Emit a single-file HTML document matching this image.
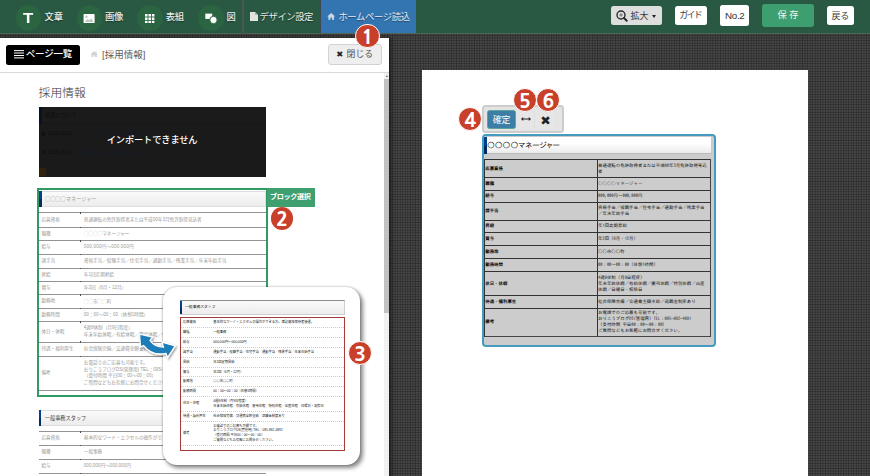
<!DOCTYPE html>
<html lang="ja">
<head>
<meta charset="utf-8">
<title>ホームページ読込</title>
<style>
*{box-sizing:border-box;margin:0;padding:0}
html,body{width:870px;height:476px;overflow:hidden}
body{position:relative;font-family:"Liberation Sans","Noto Sans CJK JP",sans-serif;color:#333;
  background-color:#474747;
  background-image:
    linear-gradient(90deg,rgba(0,0,0,.27) 0,rgba(0,0,0,.27) .86px,transparent .86px),
    linear-gradient(0deg,rgba(0,0,0,.27) 0,rgba(0,0,0,.27) .86px,transparent .86px);
  background-size:2.57px 2.57px;}
.abs{position:absolute}

/* ---------- top toolbar ---------- */
#bar{position:absolute;left:0;top:0;width:870px;height:34px;background:#2a5943;border-bottom:1px solid #4f6459}
.circ{position:absolute;top:5.2px;width:25.8px;height:25.8px;border-radius:50%;background:#2a6441;margin-left:-.4px}
.tlabel{position:absolute;top:10.9px;font-size:9.3px;line-height:12px;font-weight:500;color:#e9eeeb;white-space:nowrap;letter-spacing:-.2px;text-shadow:0 1px 1px rgba(0,0,0,.45)}
.tbtn{position:absolute;background:#fff;border-radius:2.5px;color:#333;font-size:9px;text-align:center;white-space:nowrap}

/* ---------- left panel ---------- */
#panel{position:absolute;left:0;top:37.6px;width:389px;height:440px;background:#fff;box-shadow:2px 0 4px rgba(0,0,0,.55);overflow:hidden}
#phead{position:absolute;left:0;top:0;width:389px;height:35px;border-bottom:1px solid #d9d9d9;background:#fff}
#sb{position:absolute;left:384px;top:35px;width:5px;height:405px;background:#f1f1f1}
#sb i{position:absolute;left:0;top:6.3px;width:5px;height:234px;background:#c1c1c1}

.hbox{position:absolute;height:16px;background:linear-gradient(#fafafa,#ececec);border:1px solid #ddd;border-left:0}
.hbox b{position:absolute;left:0;top:-.5px;width:2.8px;height:16px;background:linear-gradient(#05418a 50%,#042c61 50%)}
.hbox>span{position:absolute;left:6.2px;top:3.4px;font-size:5.2px;line-height:8px;white-space:nowrap;font-weight:400}

.tbl{position:absolute;font-size:4.6px;line-height:6.75px;color:#9a9a9a}
.tbl .r{position:relative;border-top:1px solid #939393;display:flex;align-items:center}
.tbl .r:last-child{border-bottom:1px solid #939393}
.tbl .l{width:42px;padding-left:2.6px;white-space:nowrap;flex:none}
.tbl .v{padding-left:3px;white-space:nowrap}
.tbl .r:before{content:"";position:absolute;left:41.2px;top:-1.2px;width:1.1px;height:1.3px;background:#4a4a4a}
.tbl .c{color:#c8c8c8}
.c{font-family:"Noto Sans CJK JP",sans-serif}
.s{font-weight:700}

/* card */
#card{position:absolute;left:163px;top:287px;width:197.2px;height:178.2px;background:#fff;border-radius:14px;box-shadow:2.5px 3px 4px rgba(0,0,0,.46),0 0 2.5px rgba(0,0,0,.32)}
.ctbl{position:absolute;font-size:3.25px;line-height:4.9px;color:#222}
.ctbl .r{position:relative;border-top:.7px dotted #cdcdcd;display:flex;align-items:center}
.ctbl .l{width:29px;padding-left:2px;white-space:nowrap;flex:none}
.ctbl .v{padding-left:3.3px;white-space:nowrap}

.badge{position:absolute;width:24.2px;height:24.2px;border-radius:50%;background:#c8402a;border:1px solid #fff;color:#fff;font-family:"NanumGothic","Liberation Sans",sans-serif;font-weight:800;font-size:19.2px;line-height:25.6px;text-align:center}

/* ---------- right canvas ---------- */
#page{position:absolute;left:421.8px;top:70.4px;width:386px;height:410px;background:#fff}
#pop{position:absolute;left:482.1px;top:104.9px;width:81.5px;height:28px;background:#e4e4e4;border:2px solid #cdcdcd;border-radius:3.5px}
#blk{position:absolute;left:482px;top:134.3px;width:233.6px;height:212.4px;background:#cccccc;border:2px solid #459cc1;border-radius:4px;overflow:hidden}
.rtbl{position:absolute;left:0;top:23.15px;width:226.6px;font-family:"IPAGothic","Noto Sans CJK JP",monospace;font-size:4.45px;line-height:5.9px;color:#111;border-left:1px solid #333;border-right:1px solid #444}
.rtbl .r{position:relative;border-top:1.1px solid #333;display:flex;align-items:center}
.rtbl .r:last-child{border-bottom:1.1px solid #444}
.rtbl .l{width:113.3px;padding-left:.2px;white-space:nowrap;flex:none;border-right:1px solid #333;align-self:stretch;display:flex;align-items:center;font-weight:700}
.rtbl .v{padding-left:0;margin-left:-.3px;white-space:nowrap}
.rtbl .c,#bh .c{font-family:inherit}
</style>
</head>
<body>

<!-- ================= TOOLBAR ================= -->
<div id="bar">
  <div class="circ" style="left:16px"></div>
  <div class="abs" style="left:22px;top:8.2px;width:12.4px;text-align:center;font-family:'Liberation Sans',sans-serif;font-weight:700;font-size:15px;line-height:20px;color:#fff;transform:scaleX(1.12)">T</div>
  <div class="tlabel" style="left:44.6px">文章</div>

  <div class="circ" style="left:77px"></div>
  <svg class="abs" style="left:83.4px;top:13.8px" width="12.2" height="9.2" viewBox="0 0 24 20"><rect x="0" y="0" width="24" height="20" rx="1.5" fill="#fff"/><circle cx="6.2" cy="6" r="2.6" fill="#b9c9c0"/><path d="M2.5 17.5 L9 10.5 L12.5 14 L16.5 9 L21.5 17.5Z" fill="#b9c9c0"/></svg>
  <div class="tlabel" style="left:105px">画像</div>

  <div class="circ" style="left:137.5px"></div>
  <svg class="abs" style="left:145.2px;top:13.5px" width="9.4" height="9.4" viewBox="0 0 10 10" fill="#fff"><rect x="0" y="0" width="2.7" height="2.7"/><rect x="3.65" y="0" width="2.7" height="2.7"/><rect x="7.3" y="0" width="2.7" height="2.7"/><rect x="0" y="3.65" width="2.7" height="2.7"/><rect x="3.65" y="3.65" width="2.7" height="2.7"/><rect x="7.3" y="3.65" width="2.7" height="2.7"/><rect x="0" y="7.3" width="2.7" height="2.7"/><rect x="3.65" y="7.3" width="2.7" height="2.7"/><rect x="7.3" y="7.3" width="2.7" height="2.7"/></svg>
  <div class="tlabel" style="left:165.7px">表組</div>

  <div class="circ" style="left:198.3px"></div>
  <svg class="abs" style="left:204.5px;top:12.6px" width="13" height="11" viewBox="0 0 13 11"><rect x="0.3" y="0.6" width="6.9" height="5.3" fill="#fff"/><circle cx="8.5" cy="7" r="3.7" fill="#fff" stroke="#2a6441" stroke-width="1"/></svg>
  <div class="tlabel" style="left:226.6px">図</div>

  <div class="abs" style="left:242.3px;top:0;width:1.3px;height:33.5px;background:#4a5753"></div>
  <svg class="abs" style="left:250px;top:11.8px" width="8" height="9" viewBox="0 0 8 9"><path d="M0 0H5L8 3V9H0Z" fill="#e0e4e2"/><path d="M5 0V3H8Z" fill="#9fb5aa"/></svg>
  <div class="tlabel" style="left:259.6px;letter-spacing:-.4px;font-weight:400">デザイン設定</div>

  <div class="abs" style="left:320px;top:0;width:96px;height:33.2px;background:#3375b1;border-left:1px solid #3d4a52"></div>
  <svg class="abs" style="left:327.4px;top:13px" width="8.4" height="6.8" viewBox="0 0 14 12"><path d="M7 0L0 6.2H2V12H5.6V8H8.4V12H12V6.2H14Z" fill="#c9d9ea"/></svg>
  <div class="tlabel" style="left:338.4px;letter-spacing:-.32px;color:#e6edf6;font-weight:400">ホームページ読込</div>

  <!-- right buttons -->
  <div class="tbtn" style="left:611px;top:5.9px;width:50.7px;height:19.2px;background:#dedede"></div>
  <svg class="abs" style="left:616.4px;top:10.2px" width="12" height="12" viewBox="0 0 12 12"><circle cx="5" cy="5" r="4" fill="none" stroke="#2b2b2b" stroke-width="1.4"/><path d="M8 8L10.7 10.7" stroke="#2b2b2b" stroke-width="2" stroke-linecap="round"/><path d="M3.2 5H6.8M5 3.2V6.8" stroke="#555" stroke-width=".8"/></svg>
  <div class="abs" style="left:630.4px;top:10.1px;font-size:9px;line-height:12px;color:#3a3a3a;white-space:nowrap">拡大</div>
  <div class="abs" style="left:651.8px;top:15px;width:0;height:0;border-left:2.7px solid transparent;border-right:2.7px solid transparent;border-top:3px solid #222"></div>

  <div class="tbtn" style="left:675px;top:5.9px;width:31.8px;height:19.2px;line-height:19.8px;letter-spacing:-1.7px;font-size:9px;color:#444;text-indent:-1.4px">ガイド</div>
  <div class="tbtn" style="left:720.2px;top:4.8px;width:28.8px;height:21.6px;line-height:21.6px;font-size:9.8px;letter-spacing:-.3px;text-indent:.3px">No.2</div>
  <div class="tbtn" style="left:762.3px;top:4.4px;width:51.4px;height:22.4px;line-height:22.8px;background:#3d9f6f;color:#eef7f2;font-size:9.2px;border-radius:3px">保 存</div>
  <div class="tbtn" style="left:826.8px;top:5.9px;width:27px;height:19.2px;line-height:20.2px;font-size:9px;letter-spacing:-.3px;color:#3a3a3a">戻る</div>
</div>

<!-- ================= LEFT PANEL ================= -->
<div id="panel">
  <div id="phead">
    <div class="abs" style="left:6.3px;top:7.2px;width:73.3px;height:20.2px;background:#000;border-radius:2.5px"></div>
    <svg class="abs" style="left:13.9px;top:12.6px" width="10.2" height="8.6" viewBox="0 0 10.2 8.6" fill="#fff"><rect y="0.1" width="10.2" height="1"/><rect y="2.5" width="10.2" height="1"/><rect y="5" width="10.2" height="1"/><rect y="7.4" width="10.2" height="1"/></svg>
    <div class="abs" style="left:25.8px;top:10.6px;font-size:9.5px;line-height:12px;font-weight:500;color:#fff;white-space:nowrap;letter-spacing:-.2px">ページ一覧</div>
    <svg class="abs" style="left:90.2px;top:13.4px" width="8.4" height="6.4" viewBox="0 0 14 12"><path d="M7 0L0 6.2H2V12H5.6V8H8.4V12H12V6.2H14L11.6 4V1H10V2.6Z" fill="#d2d2d2"/></svg>
    <div class="abs" style="left:102px;top:11.1px;font-size:9.5px;line-height:12px;color:#5a5a5a;white-space:nowrap;letter-spacing:0">[採用情報]</div>
    <div class="abs" style="left:328.4px;top:6.6px;width:53.3px;height:21.3px;background:#eee;border:1px solid #d2d2d2;border-radius:3px"></div>
    <div class="abs" style="left:336.2px;top:10.4px;font-family:'DejaVu Sans',sans-serif;font-size:8.4px;line-height:12px;color:#222;font-weight:700">✖</div>
    <div class="abs" style="left:346.6px;top:10.6px;font-size:8.9px;line-height:12px;color:#555;white-space:nowrap">閉じる</div>
  </div>
  <div id="sb"><i></i></div>
  <div class="abs" style="left:385.2px;top:36.2px;font-size:3.4px;line-height:4px;color:#666">▲</div>

  <!-- page heading -->
  <div class="abs" style="left:38.6px;top:47.6px;font-size:11.8px;line-height:16px;color:#333;font-weight:300;white-space:nowrap">採用情報</div>

  <!-- un-importable dark block -->
  <div class="abs" style="left:38.5px;top:69px;width:227.2px;height:70px;background:#1a1a1a;overflow:hidden">
    <div class="abs" style="left:0;top:0;width:227.2px;height:17.6px;background:#1b1b1b;border-bottom:1px solid #171717"></div>
    <div class="abs" style="left:0;top:.6px;width:3px;height:16.6px;background:#061226"></div>
    <div class="abs" style="left:7px;top:5.6px;font-size:5.2px;line-height:7px;color:#0d0d0d;white-space:nowrap">募集について</div>
    <div class="abs" style="left:3px;top:25.4px;width:3.6px;height:3.6px;border:1px solid #0a0a0a;border-radius:50%"></div>
    <div class="abs" style="left:10px;top:23.8px;font-size:4.7px;line-height:7px;color:#0c0c0c;white-space:nowrap">2005-11-01 &nbsp;&nbsp;<span style="color:#121a2b"><span class="c">○○○○</span>マネージャーを募集中です。</span></div>
    <div class="abs" style="left:3px;top:43.6px;width:3.6px;height:3.6px;border:1px solid #0a0a0a;border-radius:50%"></div>
    <div class="abs" style="left:10px;top:42px;font-size:4.7px;line-height:7px;color:#0c0c0c;white-space:nowrap">2005-11-01 &nbsp;&nbsp;<span style="color:#121a2b">一般事務スタッフを募集中です。</span></div>
    <div class="abs" style="left:.4px;top:61.4px;width:7.6px;height:7.8px;background:#31200a;border-radius:1px"></div>
    <div class="abs" style="left:0;top:27.6px;width:227.2px;text-align:center;font-size:9.25px;line-height:13px;color:#fff;font-weight:500;white-space:nowrap;letter-spacing:-.15px">インポートできません</div>
  </div>

  <!-- selected block 1 -->
  <div class="abs" style="left:37.2px;top:150.4px;width:230.8px;height:209px;border:2px solid #2f9b63"></div>
  <div class="abs" style="left:266.5px;top:150.6px;width:48.2px;height:19px;background:#3f9f6f"></div>
  <div class="abs" style="left:270px;top:155.2px;font-size:7.1px;line-height:9px;color:#fff;font-weight:700;white-space:nowrap;letter-spacing:-.35px">ブロック選択</div>

  <div class="hbox" style="left:38.8px;top:153.4px;width:227.2px"><b></b><span style="color:#a3a3a3"><span class="c">○○○○</span>マネージャー</span></div>
  <div class="tbl" style="left:38.8px;top:174.9px;width:227.2px">
    <div class="r" style="height:14.6px"><div class="l">応募資格</div><div class="v">普通運転の免許取得者または平成00年3月免許取得見込者</div></div>
    <div class="r" style="height:13.4px"><div class="l">職種</div><div class="v"><span class="c">○○○○</span>マネージャー</div></div>
    <div class="r" style="height:13.5px"><div class="l">給与</div><div class="v" style="letter-spacing:.18px">000,000円～000,000円</div></div>
    <div class="r" style="height:13.8px"><div class="l">諸手当</div><div class="v">資格手当<b class="s">／</b>役職手当<b class="s">／</b>住宅手当<b class="s">／</b>通勤手当<b class="s">／</b>残業手当<b class="s">／</b>年末年始手当</div></div>
    <div class="r" style="height:13.4px"><div class="l">昇給</div><div class="v">年1回定期昇給</div></div>
    <div class="r" style="height:13.3px"><div class="l">賞与</div><div class="v">年2回（6月・12月）</div></div>
    <div class="r" style="height:13.6px"><div class="l">勤務地</div><div class="v"><span class="c">○○</span>市<span class="c">○○</span>町</div></div>
    <div class="r" style="height:13.4px"><div class="l">勤務時間</div><div class="v">00：00～00：00（休憩1時間）</div></div>
    <div class="r" style="height:20.2px"><div class="l">休日・休暇</div><div class="v">4週8休制（月9日程度）<br>年末年始休暇<b class="s">／</b>有給休暇<b class="s">／</b>慶弔休暇<b class="s">／</b>特別休暇<b class="s">／</b>出産休暇<b class="s">／</b>日曜日・祝祭日</div></div>
    <div class="r" style="height:14.3px"><div class="l">待遇・福利厚生</div><div class="v">社会保険完備<b class="s">／</b>交通費全額支給<b class="s">／</b>退職金制度あり</div></div>
    <div class="r" style="height:35px"><div class="l">備考</div><div class="v">お電話でのご応募も可能です。<br>おりこうブログDS(管理用) TEL：095-862-4891<br>（受付時間 平日00：00～00：00）<br>ご質問などもお気軽にお問合せください。</div></div>
  </div>

  <!-- block 2 -->
  <div class="hbox" style="left:38.6px;top:372.2px;width:227.2px"><b></b><span style="color:#444">一般事務スタッフ</span></div>
  <div class="tbl" style="left:38.8px;top:393.9px;width:227.2px">
    <div class="r" style="height:13.6px"><div class="l">応募資格</div><div class="v">基本的なワード・エクセルの操作ができる方。簿記資格保持者優遇。</div></div>
    <div class="r" style="height:14px"><div class="l">職種</div><div class="v">一般事務</div></div>
    <div class="r" style="height:14px"><div class="l">給与</div><div class="v">000,000円～000,000円</div></div>
    <div class="r" style="height:14px"><div class="l">諸手当</div><div class="v">通勤手当<b class="s">／</b>役職手当<b class="s">／</b>住宅手当<b class="s">／</b>通勤手当<b class="s">／</b>残業手当<b class="s">／</b>年末年始手当</div></div>
  </div>

  <!-- badge 2 -->
  <div class="badge" style="left:270.9px;top:169.9px;width:22.2px;height:22.2px;border:0;line-height:25.6px">2</div>
</div>

<!-- ================= POPUP CARD ================= -->
<div id="card">
  <div class="hbox" style="left:16.9px;top:13.4px;width:165.3px;height:14.4px;border-color:#cfcfcf;border-top:1.2px solid #8c8c8c"><b style="height:13px;width:2.2px;top:0"></b><span style="left:5.2px;top:3px;font-size:3.8px;line-height:6px;color:#222">一般事務スタッフ</span></div>
  <div class="abs" style="left:16.9px;top:30.4px;width:165.3px;height:133.4px;border:1.1px solid #a43a3a"></div>
  <div class="ctbl" style="left:18px;top:31px;width:163.1px">
    <div class="r" style="height:9.4px;border-top:0"><div class="l">応募資格</div><div class="v">基本的なワード・エクセルの操作ができる方。簿記資格保持者優遇。</div></div>
    <div class="r" style="height:9.9px"><div class="l">職種</div><div class="v">一般事務</div></div>
    <div class="r" style="height:9.9px"><div class="l">給与</div><div class="v">000,000円～000,000円</div></div>
    <div class="r" style="height:9.8px"><div class="l">諸手当</div><div class="v">通勤手当<b class="s">／</b>役職手当<b class="s">／</b>住宅手当<b class="s">／</b>通勤手当<b class="s">／</b>残業手当<b class="s">／</b>年末年始手当</div></div>
    <div class="r" style="height:9.7px"><div class="l">昇給</div><div class="v">年1回定期昇給</div></div>
    <div class="r" style="height:9.6px"><div class="l">賞与</div><div class="v">年2回（6月・12月）</div></div>
    <div class="r" style="height:9.8px"><div class="l">勤務地</div><div class="v"><span class="c">○○</span>市<span class="c">○○</span>町</div></div>
    <div class="r" style="height:9.6px"><div class="l">勤務時間</div><div class="v">00：00～00：00（休憩1時間）</div></div>
    <div class="r" style="height:15.2px"><div class="l">休日・休暇</div><div class="v">4週8休制（月9日程度）<br>年末年始休暇<b class="s">／</b>有給休暇<b class="s">／</b>慶弔休暇<b class="s">／</b>特別休暇<b class="s">／</b>出産休暇<b class="s">／</b>日曜日・祝祭日</div></div>
    <div class="r" style="height:10.1px"><div class="l">待遇・福利厚生</div><div class="v">社会保険完備<b class="s">／</b>交通費全額支給<b class="s">／</b>退職金制度あり</div></div>
    <div class="r" style="height:23.8px"><div class="l">備考</div><div class="v">お電話でのご応募も可能です。<br>おりこうブログDS(管理用) TEL：095-862-4891<br>（受付時間 平日00：00～00：00）<br>ご質問などもお気軽にお問合せください。</div></div>
    <div class="r" style="height:2px"></div>
  </div>
</div>
<!-- blue swap arrow (overlaps the card edge) -->
<svg class="abs" style="left:130px;top:325px" width="56" height="42" viewBox="130 325 56 42">
  <defs><filter id="as" x="-20%" y="-20%" width="150%" height="150%"><feDropShadow dx="1" dy="1.2" stdDeviation="0.9" flood-color="#000" flood-opacity=".45"/></filter></defs>
  <path filter="url(#as)" d="M139.5 334.1 L152.5 337 L150 340.4 Q154.6 347.1 163.5 347.1 L161.9 342 L175.2 345.8 L167.6 357.5 L166 353.4 Q152.1 356.3 143.7 345.6 L140.5 346.8 Z" fill="#1b7db9" stroke="#fff" stroke-width="1.3" stroke-linejoin="miter"/>
</svg>

<div class="badge" style="left:348px;top:340.7px">3</div>
<div class="badge" style="left:355.4px;top:23.65px">1</div>

<!-- ================= RIGHT CANVAS ================= -->
<div id="page"></div>

<div id="pop">
  <div class="abs" style="left:3.2px;top:3px;width:28.4px;height:18.8px;background:#3b7fa6;border:1px solid #5fa39a;border-radius:2.5px;color:#fff;font-size:8.9px;line-height:19px;text-align:center;letter-spacing:-.2px">確定</div>
  <div class="abs" style="left:31.6px;top:3px;width:19px;height:18.8px;background:#e6e6e6;border-right:1px solid #dedede"></div>
  <div class="abs" style="left:50.6px;top:3px;width:20.6px;height:18.8px;background:#e6e6e6;border-radius:0 2.5px 2.5px 0"></div>
  <svg class="abs" style="left:36.8px;top:9.4px" width="10" height="6" viewBox="0 0 10 6"><path d="M0 3L2.2 1.1V2.55H7.8V1.1L10 3L7.8 4.9V3.45H2.2V4.9Z" fill="#222"/></svg>
  <div class="abs" style="left:56.2px;top:8.1px;font-family:'DejaVu Sans',sans-serif;font-size:12.6px;line-height:12px;color:#222;font-weight:700">✖</div>
</div>

<div id="blk">
  <div class="abs" style="left:0;top:0;width:227.6px;height:18.2px;background:linear-gradient(#fff 40%,#ebebeb);border:1px solid #c9c9c9;border-left:0;border-bottom-color:#bbb"></div>
  <div class="abs" style="left:0;top:1.1px;width:2.5px;height:16.2px;background:linear-gradient(#004089 50%,#012b60 50%)"></div>
  <div id="bh" class="abs" style="left:3px;top:4.2px;font-family:'IPAPGothic','Noto Sans CJK JP',sans-serif;font-size:7.8px;line-height:10px;color:#000;white-space:nowrap"><span class="c">○○○○</span>マネージャー</div>
  <div class="rtbl">
    <div class="r" style="height:18px"><div class="l">応募資格</div><div class="v">普通運転の免許取得者または平成00年3月免許取得見込<br>者</div></div>
    <div class="r" style="height:12.1px"><div class="l">職種</div><div class="v" style="color:#444"><span class="c">○○○○</span>マネージャー</div></div>
    <div class="r" style="height:12.1px"><div class="l">給与</div><div class="v">000,000円～000,000円</div></div>
    <div class="r" style="height:17.9px"><div class="l">諸手当</div><div class="v">資格手当／役職手当／住宅手当／通勤手当／残業手当<br>／年末年始手当</div></div>
    <div class="r" style="height:12.8px"><div class="l">昇給</div><div class="v">年1回定期昇給</div></div>
    <div class="r" style="height:12.9px"><div class="l">賞与</div><div class="v">年2回（6月・12月）</div></div>
    <div class="r" style="height:13px"><div class="l">勤務地</div><div class="v"><span class="c">○○</span>市<span class="c">○○</span>町</div></div>
    <div class="r" style="height:13.2px"><div class="l">勤務時間</div><div class="v">00：00～00：00（休憩1時間）</div></div>
    <div class="r" style="height:23.4px"><div class="l">休日・休暇</div><div class="v">4週8休制（月9日程度）<br>年末年始休暇／有給休暇／慶弔休暇／特別休暇／出産<br>休暇／日曜日・祝祭日</div></div>
    <div class="r" style="height:13.2px"><div class="l">待遇・福利厚生</div><div class="v">社会保険完備／交通費全額支給／退職金制度あり</div></div>
    <div class="r" style="height:28.6px"><div class="l">備考</div><div class="v">お電話でのご応募も可能です。<br>おりこうブログDS(管理用) TEL：095-862-4891<br>（受付時間 平日00：00～00：00）<br>ご質問などもお気軽にお問合せください。</div></div>
  </div>
</div>

<div class="badge" style="left:458.2px;top:106.7px">4</div>
<div class="badge" style="left:512.7px;top:87.7px">5</div>
<div class="badge" style="left:536.2px;top:87.7px">6</div>

</body>
</html>
